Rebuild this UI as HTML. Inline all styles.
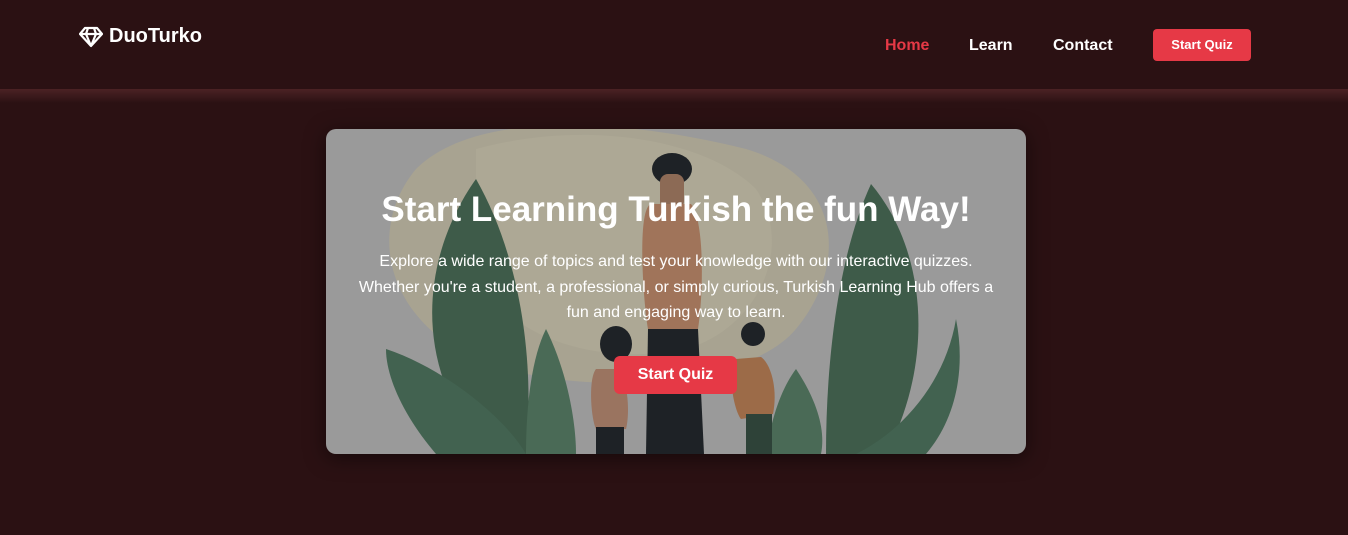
<!DOCTYPE html>
<html><head><style>
*{margin:0;padding:0;box-sizing:border-box}
body{width:1348px;height:535px;background:#2b1113;font-family:"Liberation Sans",sans-serif;overflow:hidden;position:relative}
.hdr{position:absolute;left:0;top:0;width:1348px;height:89px;background:#2b1113}
.shade{position:absolute;left:0;top:89px;width:1348px;height:14px;background:linear-gradient(#4b2224,#2b1113)}
.logo{position:absolute;left:79px;top:25px;color:#fff;font-weight:bold;font-size:20px;display:flex;align-items:center;gap:6px}
.nav{position:absolute;top:37px;font-weight:bold;font-size:16px;color:#fff}
.btn{position:absolute;left:1153px;top:29px;width:98px;height:32px;background:#e63946;border-radius:4px;color:#fff;font-weight:bold;font-size:13px;text-align:center;line-height:32px}
.card{position:absolute;left:326px;top:129px;width:700px;height:325px;border-radius:10px;overflow:hidden;background:#9a9a9a;box-shadow:0 4px 20px rgba(0,0,0,.5)}
.card svg{position:absolute;left:0;top:0}
h1{position:absolute;left:0;width:700px;top:61px;text-align:center;color:#fff;font-size:35px;font-weight:bold}
p{position:absolute;left:28px;width:644px;top:120px;text-align:center;color:#fff;font-size:16px;line-height:25.5px}
.cb{position:absolute;left:288px;top:227px;width:123px;height:38px;background:#e63946;border-radius:6px;color:#fff;font-weight:bold;font-size:16px;text-align:center;line-height:38px}
</style></head><body>
<div class="hdr"></div><div class="shade"></div>
<div class="logo"><svg width="24" height="22" viewBox="0 0 24 22" fill="none" stroke="#fff" stroke-width="2.2" stroke-linejoin="round"><path d="M6 2h12l5 6-11 12L1 8z M1 8h22 M9 2 7 8l5 12 5-12-2-6"/></svg>DuoTurko</div>
<div class="nav" style="left:885px;color:#e63946">Home</div>
<div class="nav" style="left:969px">Learn</div>
<div class="nav" style="left:1053px">Contact</div>
<div class="btn">Start Quiz</div>
<div class="card">
<svg width="700" height="325" viewBox="0 0 700 325">
<path d="M90 40 C150 -20 300 -10 420 20 C520 50 520 140 470 200 C420 260 250 270 150 230 C60 190 40 100 90 40z" fill="#a8a391"/>
<path d="M150 20 C260 -10 380 10 430 60 C470 120 430 200 360 220 C260 240 170 200 150 140z" fill="#b0ab97" opacity=".6"/>
<path d="M150 50 C100 120 80 230 160 325 L200 325 C210 220 190 120 150 50z" fill="#3e5b49"/>
<path d="M60 220 C120 240 180 290 200 325 L110 325 C80 290 60 250 60 220z" fill="#426250"/>
<path d="M545 55 C600 120 610 230 560 325 L500 325 C500 220 515 120 545 55z" fill="#3e5b49"/>
<path d="M630 190 C620 250 580 300 530 325 L600 325 C630 290 640 240 630 190z" fill="#426250"/>
<path d="M220 200 C240 240 250 290 250 325 L200 325 C200 280 205 230 220 200z" fill="#4a6a56"/>
<path d="M470 240 C490 270 500 300 495 325 L440 325 C445 290 455 260 470 240z" fill="#4a6a56"/>
<ellipse cx="346" cy="40" rx="20" ry="16" fill="#1e2226"/>
<rect x="334" y="45" width="24" height="35" rx="8" fill="#8c6a55"/>
<path d="M325 75 C310 80 318 180 322 200 L372 200 C378 160 378 90 365 75z" fill="#a0745a"/>
<path d="M322 200 L320 325 L378 325 L372 200z" fill="#1e2226"/>
<ellipse cx="290" cy="215" rx="16" ry="18" fill="#1e2226"/>
<path d="M270 240 C262 250 265 290 270 300 L300 300 C305 280 300 245 292 240z" fill="#9a7460"/>
<rect x="270" y="298" width="28" height="27" fill="#1e2226"/>
<circle cx="427" cy="205" r="12" fill="#1e2226"/>
<path d="M410 230 C400 250 410 285 415 290 L447 285 C452 260 445 235 435 228z" fill="#9c6b48"/>
<rect x="420" y="285" width="26" height="40" fill="#2e4238"/>
</svg>
<h1>Start Learning Turkish the fun Way!</h1>
<p>Explore a wide range of topics and test your knowledge with our interactive quizzes. Whether you're a student, a professional, or simply curious, Turkish Learning Hub offers a fun and engaging way to learn.</p>
<div class="cb">Start Quiz</div>
</div>
</body></html>
